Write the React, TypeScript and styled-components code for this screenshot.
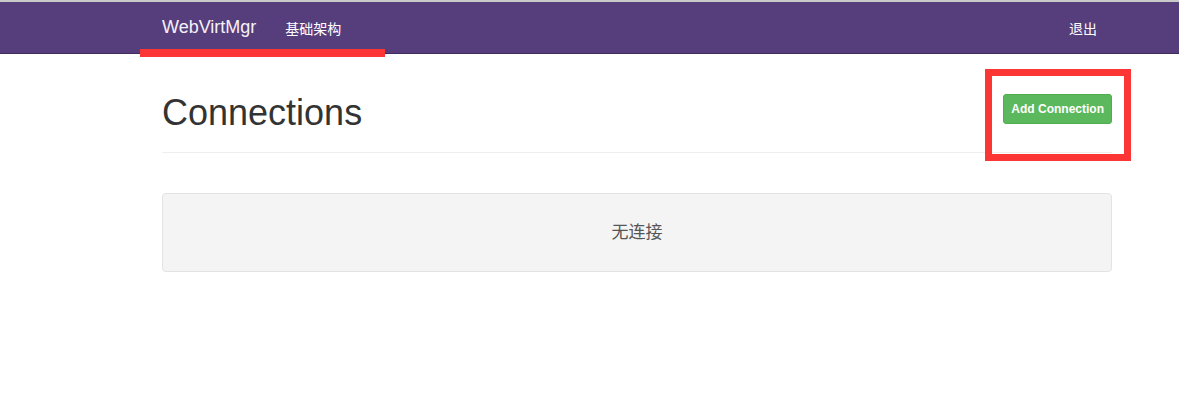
import React from 'react';
import styled, { createGlobalStyle } from 'styled-components';

const GlobalStyle = createGlobalStyle`
  html, body {
    margin: 0;
    padding: 0;
    background: #fff;
    font-family: "Liberation Sans", "Noto Sans CJK SC", Arial, sans-serif;
    font-size: 14px;
    color: #333;
  }
`;

const Page = styled.div`
  position: relative;
  width: 1179px;
  min-height: 394px;
  border-top: 2px solid #c9c9c9;
  box-sizing: border-box;
`;

const Container = styled.div`
  width: 950px;
  margin-left: 162px;
`;

const Navbar = styled.nav`
  height: 51px;
  background: #563d7c;
  border-bottom: 1px solid #3f2c5c;
`;

const NavInner = styled(Container)`
  height: 100%;
  display: flex;
  align-items: center;
  justify-content: space-between;
`;

const NavLeft = styled.div`
  display: flex;
  align-items: center;
  gap: 29px;
`;

const Brand = styled.a`
  font-size: 18px;
  color: #f4f2f8;
  text-decoration: none;
`;

const NavLink = styled.a`
  font-size: 14px;
  color: #fff;
  text-decoration: none;
  font-family: "Liberation Sans", "Noto Sans CJK SC", sans-serif;
`;

const Logout = styled(NavLink)`
  margin-right: 15px;
`;

const PageHeader = styled.div`
  display: flex;
  justify-content: space-between;
  align-items: flex-start;
  margin-top: 39px;
  padding-bottom: 9px;
  border-bottom: 1px solid #eee;
`;

const Title = styled.h1`
  margin: 0 0 10px;
  font-size: 36px;
  font-weight: 500;
  line-height: 1.1;
  color: #333;
`;

const Button = styled.button`
  margin-top: 1px;
  height: 30px;
  padding: 0 7px;
  background: #5cb85c;
  border: 1px solid #4cae4c;
  border-radius: 3px;
  color: #fff;
  font-family: "Liberation Sans", Arial, sans-serif;
  font-size: 12px;
  font-weight: bold;
  cursor: pointer;
`;

const Well = styled.div`
  margin-top: 40px;
  padding: 26px 19px 30px;
  background: #f4f4f4;
  border: 1px solid #e3e3e3;
  border-radius: 4px;
  text-align: center;
  font-family: "Noto Sans CJK SC", sans-serif;
  font-size: 17px;
  line-height: 21px;
  color: #555;
`;

// annotation marks drawn over the screenshot
const Underline = styled.div`
  position: absolute;
  left: 140px;
  top: 47px;
  width: 245px;
  height: 8px;
  background: #fc3535;
`;

const HighlightBox = styled.div`
  position: absolute;
  left: 985px;
  top: 67px;
  width: 146px;
  height: 92px;
  border: 7px solid #fc3535;
  box-sizing: border-box;
`;

const App: React.FC = () => {
  return (
    <>
      <GlobalStyle />
      <Page>
        <Navbar>
          <NavInner>
            <NavLeft>
              <Brand href="#">WebVirtMgr</Brand>
              <NavLink href="#">基础架构</NavLink>
            </NavLeft>
            <Logout href="#">退出</Logout>
          </NavInner>
        </Navbar>
        <Container>
          <PageHeader>
            <Title>Connections</Title>
            <Button>Add Connection</Button>
          </PageHeader>
          <Well>无连接</Well>
        </Container>
        <Underline />
        <HighlightBox />
      </Page>
    </>
  );
};

export default App;
